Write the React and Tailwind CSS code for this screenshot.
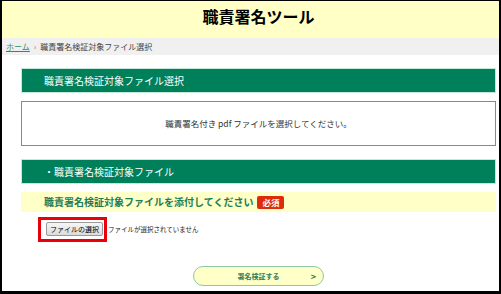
import React from 'react';

const font = { fontFamily: '"Noto Sans CJK JP", "Noto Sans", sans-serif' };

const SectionBar = ({ children }) => (
  <div className="h-[25px] flex items-center pl-[22px] bg-[#00805a] border border-[#c6e8d9] text-white text-[10px] leading-none">
    {children}
  </div>
);

export default function App() {
  return (
    <div
      className="w-[501px] h-[294px] overflow-hidden bg-white border-t border-l-2 border-r-2 border-b-[3px] border-black flex flex-col"
      style={font}
    >
      {/* Header */}
      <header className="h-[37px] shrink-0 bg-[#ffffc6] flex justify-center pt-[6px] pl-[16px]">
        <h1 className="text-[16px] leading-[18px] font-bold text-black">職責署名ツール</h1>
      </header>

      {/* Breadcrumb */}
      <nav className="h-[17px] shrink-0 bg-[#f0f0f0] flex items-center pl-[4px] gap-[4px] text-[8px] leading-none text-[#444]">
        <a className="text-[#2f8a6c] underline">ホーム</a>
        <span className="text-[#777] text-[8px]">›</span>
        <span>職責署名検証対象ファイル選択</span>
      </nav>

      <main className="ml-[19px] mr-[3px] mt-[13px] flex flex-col">
        <SectionBar>職責署名検証対象ファイル選択</SectionBar>

        <div className="mt-[8px] h-[45px] border border-[#888] flex items-center justify-center text-[8.5px] leading-none text-[#333]">
          職責署名付き pdf ファイルを選択してください。
        </div>

        <div className="mt-[13px]">
          <SectionBar>・職責署名検証対象ファイル</SectionBar>
        </div>

        <div className="mt-[8px] h-[20px] bg-[#ffffc8] flex items-center pl-[23px] gap-[4px]">
          <span className="text-[10px] leading-none font-bold text-[#1f7d55]">
            職責署名検証対象ファイルを添付してください
          </span>
          <span className="h-[13px] px-[5px] flex items-center rounded-[2px] bg-[#dd2b0c] text-white font-bold text-[8.5px] leading-none">
            必須
          </span>
        </div>

        <div className="mt-[5px] ml-[17px] flex items-center">
          <div className="flex border-[3px] border-[#e8000b] pl-[5px] pr-[1px] pt-[2px] pb-[3px]">
            <button className="h-[14px] px-[3px] border border-[#9a9a9a] rounded-[2px] bg-gradient-to-b from-[#f6f6f6] to-[#dcdcdc] text-[7px] leading-none text-black">
              ファイルの選択
            </button>
          </div>
          <span className="ml-[1px] text-[6.5px] leading-none text-[#222]">ファイルが選択されていません</span>
        </div>

        <div className="mt-[24px] flex justify-center">
          <button className="relative w-[131px] h-[20px] rounded-full border border-[#8cc7a4] bg-[#ffffc8] flex items-center justify-center text-[7px] leading-none font-bold text-[#2f7f5e]">
            署名検証する
            <span className="absolute right-[7px] top-1/2 -translate-y-1/2 text-[9px] font-bold text-[#2f7f5e]">&gt;</span>
          </button>
        </div>
      </main>
    </div>
  );
}
